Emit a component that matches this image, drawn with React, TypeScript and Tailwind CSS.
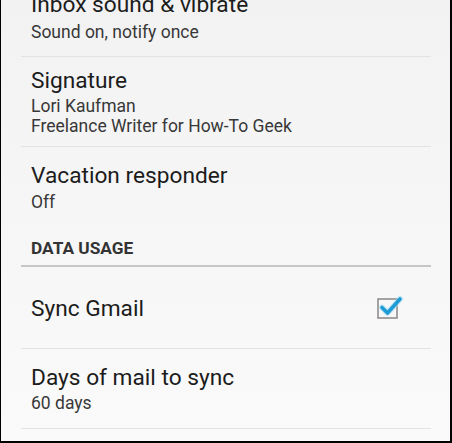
import React from 'react';

// Android Gmail settings list (holo light)
const FONT = "Roboto, 'Liberation Sans', sans-serif";

function Divider() {
  return <div className="h-px bg-[#e2e2e2]" />;
}

function Checkbox() {
  return (
    <svg width="30" height="30" viewBox="0 0 30 30" className="block">
      <rect x="3" y="5" width="19" height="19" fill="none" stroke="#8e8e8e" strokeWidth="1.6" />
      <path d="M7 13.5 L12.5 19 L25 5" fill="none" stroke="#a9dcf2" strokeWidth="6" strokeLinecap="round" strokeLinejoin="round" opacity="0.6" />
      <path d="M7 13.5 L12.5 19 L25 5" fill="none" stroke="#1e9cd6" strokeWidth="3.6" strokeLinecap="round" strokeLinejoin="round" />
    </svg>
  );
}

export default function App() {
  return (
    <div
      className="w-[452px] h-[443px] overflow-hidden border-l border-r-2 border-b-2 border-black bg-gradient-to-b from-[#f2f2f2] to-[#fafafa]"
      style={{ fontFamily: FONT }}
    >
      <div className="ml-[20px] mr-[19px]">
        {/* Inbox sound & vibrate (clipped) */}
        <div className="-mt-[10px] pb-[14px] px-[10px]">
          <div className="text-[22.7px] leading-[30px] text-[#1c1c1c]">Inbox sound &amp; vibrate</div>
          <div className="mt-[2px] text-[17.5px] leading-[20px] text-[#383838]">Sound on, notify once</div>
        </div>
        <Divider />

        {/* Signature */}
        <div className="pt-[9px] pb-[10px] px-[10px]">
          <div className="text-[22.7px] leading-[30px] text-[#1c1c1c]">Signature</div>
          <div className="text-[17.5px] leading-[20px] text-[#383838]">Lori Kaufman</div>
          <div className="text-[17.5px] leading-[20px] text-[#383838]">Freelance Writer for How-To Geek</div>
        </div>
        <Divider />

        {/* Vacation responder */}
        <div className="pt-[14px] px-[10px]">
          <div className="text-[22.7px] leading-[30px] text-[#1c1c1c]">Vacation responder</div>
          <div className="mt-[1px] text-[17.5px] leading-[20px] text-[#383838]">Off</div>
        </div>

        {/* Section header */}
        <div className="pt-[26px] pb-[7px] px-[10px] text-[17.3px] leading-[20px] font-bold text-[#333333]">
          DATA USAGE
        </div>
        <div className="h-[2px] bg-[#c6c6c6]" />

        {/* Sync Gmail */}
        <div className="flex items-center justify-between pt-[27px] pb-[24px] pl-[10px] pr-[26px]">
          <div className="text-[22.7px] leading-[30px] text-[#1c1c1c]">Sync Gmail</div>
          <Checkbox />
        </div>
        <Divider />

        {/* Days of mail to sync */}
        <div className="pt-[14px] pb-[15px] px-[10px]">
          <div className="text-[22.7px] leading-[30px] text-[#1c1c1c]">Days of mail to sync</div>
          <div className="text-[17.5px] leading-[20px] text-[#383838]">60 days</div>
        </div>
        <Divider />
      </div>
    </div>
  );
}
